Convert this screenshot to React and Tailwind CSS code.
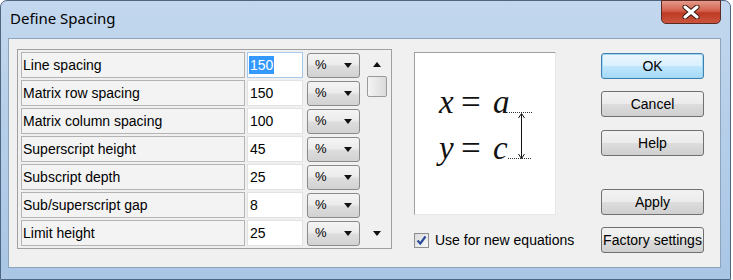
import React from "react";

const rows = [
  ["Line spacing", "150"],
  ["Matrix row spacing", "150"],
  ["Matrix column spacing", "100"],
  ["Superscript height", "45"],
  ["Subscript depth", "25"],
  ["Sub/superscript gap", "8"],
  ["Limit height", "25"],
];

const ui = { fontFamily: '"Liberation Sans", Arial, sans-serif' };

function Tri({ up = false, className = "" }) {
  return (
    <svg width="8" height="5" viewBox="0 0 8 5" className={className}>
      {up ? <path d="M0 5 L4 0 L8 5 Z" fill="#111" /> : <path d="M0 0 L8 0 L4 5 Z" fill="#111" />}
    </svg>
  );
}

function Btn({ children, focus = false, className = "" }) {
  return (
    <div
      className={
        "w-[103px] h-[26px] rounded-[3px] border flex items-center justify-center text-[14px] text-black whitespace-nowrap " +
        (focus
          ? "border-[#3c7fb1] shadow-[inset_0_0_0_1px_#9fd7f5] bg-[linear-gradient(#eaf6fd_0%,#d9f0fc_50%,#bee6fd_51%,#a7d9f5_100%)] "
          : "border-[#707070] bg-[linear-gradient(#f2f2f2_0%,#ebebeb_50%,#dddddd_51%,#cfcfcf_100%)] ") +
        className
      }
      style={ui}
    >
      {children}
    </div>
  );
}

export default function App() {
  return (
    <div className="w-[733px] h-[280px] bg-white">
      <div className="w-[731px] h-[280px] rounded-t-[7px] border border-[#4d6682] bg-[linear-gradient(180deg,#c3d8ee_0%,#b7cfe9_40%,#a9c6e5_100%)] flex flex-col relative">
        {/* title bar */}
        <div className="h-[37px] flex items-center pl-[9px] pb-[2px]">
          <span className="text-[15px] text-black" style={{ fontFamily: '"Noto Sans", "Open Sans", sans-serif' }}>
            Define Spacing
          </span>
        </div>
        {/* close button */}
        <div className="absolute right-[9px] top-[-1px] w-[60px] h-[24px] rounded-b-[5px] border border-[#5c2a22] bg-[linear-gradient(180deg,#e39a8a_0%,#d2604b_45%,#bd3a24_55%,#cb553e_100%)] flex items-center justify-center">
          <svg width="18" height="14" viewBox="0 0 18 14">
            <path d="M3 2 L15 12 M15 2 L3 12" stroke="#3a1a14" strokeWidth="5" strokeLinecap="round" />
            <path d="M3 2 L15 12 M15 2 L3 12" stroke="#ffffff" strokeWidth="3" strokeLinecap="round" />
          </svg>
        </div>

        {/* client area */}
        <div className="ml-[7px] mr-[9px] h-[230px] bg-[#f0f0f0] border border-[#8ea4bd] flex pl-[8px] pt-[10px]" style={ui}>
          {/* list panel */}
          <div className="w-[375px] h-[200px] shrink-0 border border-[#a0a0a0] bg-[#f0f0f0] flex pl-[3px] pt-[2px]">
            <div className="flex flex-col gap-[2px]">
              {rows.map(([label, val], i) => (
                <div key={label} className="flex items-center h-[26px]">
                  <div className="w-[224px] h-[26px] border border-[#b4b4b4] bg-[#f3f3f3] flex items-center pl-[1px] text-[14px] text-black">
                    {label}
                  </div>
                  <div
                    className={
                      "ml-[2px] w-[56px] h-[26px] bg-white border flex items-center pl-[1px] text-[14px] text-black " +
                      (i === 0 ? "border-[#a6c8ec]" : "border-[#e2e2e2]")
                    }
                  >
                    {i === 0 ? (
                      <span className="bg-[#3399ff] text-white px-[1px] leading-[18px]">{val}</span>
                    ) : (
                      <span className="pl-[1px]">{val}</span>
                    )}
                  </div>
                  <div className="ml-[4px] w-[53px] h-[25px] rounded-[3px] border border-[#8a8a8a] bg-[linear-gradient(180deg,#f4f4f4_0%,#ececec_45%,#dcdcdc_55%,#d2d2d2_100%)] flex items-center pl-[7px] pr-[7px] justify-between text-[13px] text-black">
                    <span>%</span>
                    <Tri />
                  </div>
                </div>
              ))}
            </div>
            {/* scrollbar */}
            <div className="ml-[6px] w-[21px] flex flex-col items-center">
              <div className="h-[24px] flex items-center justify-center pt-[1px]">
                <Tri up />
              </div>
              <div className="w-[20px] h-[21px] rounded-[2px] border border-[#9a9a9a] bg-[linear-gradient(90deg,#f4f4f4,#dadada)]" />
              <div className="flex-1" />
              <div className="h-[24px] flex items-center justify-center pb-[6px]">
                <Tri />
              </div>
            </div>
          </div>

          {/* preview + checkbox */}
          <div className="ml-[22px] pt-[3px] w-[142px] shrink-0 flex flex-col">
            <div className="w-[142px] h-[163px] bg-white border-l border-t border-[#a0a0a0] border-r border-r-[#e8e8e8] border-b border-b-[#e8e8e8]">
              <svg width="141" height="162" viewBox="0 0 141 162">
                <g fontFamily='"Liberation Serif", "Times New Roman", serif' fill="#111">
                  <text x="24" y="60" fontSize="33" fontStyle="italic">x</text>
                  <text x="46" y="61" fontSize="35">=</text>
                  <text x="78" y="60" fontSize="33" fontStyle="italic">a</text>
                  <text x="24" y="106" fontSize="33" fontStyle="italic">y</text>
                  <text x="46" y="107" fontSize="35">=</text>
                  <text x="78" y="106" fontSize="33" fontStyle="italic">c</text>
                </g>
                <line x1="94" y1="59.5" x2="117" y2="59.5" stroke="#333" strokeWidth="1" strokeDasharray="1 1" />
                <line x1="93" y1="105.5" x2="117" y2="105.5" stroke="#333" strokeWidth="1" strokeDasharray="1 1" />
                <line x1="106.5" y1="61" x2="106.5" y2="105" stroke="#111" strokeWidth="1" />
                <path d="M103.5 65 L106.5 60.5 L109.5 65" fill="none" stroke="#111" strokeWidth="1" />
                <path d="M103.5 101 L106.5 105.5 L109.5 101" fill="none" stroke="#111" strokeWidth="1" />
              </svg>
            </div>
            <div className="mt-[15px] flex items-center whitespace-nowrap">
              <div className="w-[15px] h-[15px] shrink-0 border border-[#8f8f8f] bg-[linear-gradient(135deg,#dcdcdc,#f8f8f8)] flex items-center justify-center">
                <svg width="11" height="11" viewBox="0 0 11 11">
                  <path d="M1.5 5.5 L4.3 8.5 L9.5 1.5" fill="none" stroke="#2d4d9a" strokeWidth="2.2" />
                </svg>
              </div>
              <span className="ml-[6px] text-[14px] text-black">Use for new equations</span>
            </div>
          </div>

          {/* buttons */}
          <div className="ml-[45px] pt-[4px] flex flex-col">
            <Btn focus>OK</Btn>
            <Btn className="mt-[12px]">Cancel</Btn>
            <Btn className="mt-[13px]">Help</Btn>
            <Btn className="mt-[33px]">Apply</Btn>
            <Btn className="mt-[12px]">Factory settings</Btn>
          </div>
        </div>
      </div>
    </div>
  );
}
